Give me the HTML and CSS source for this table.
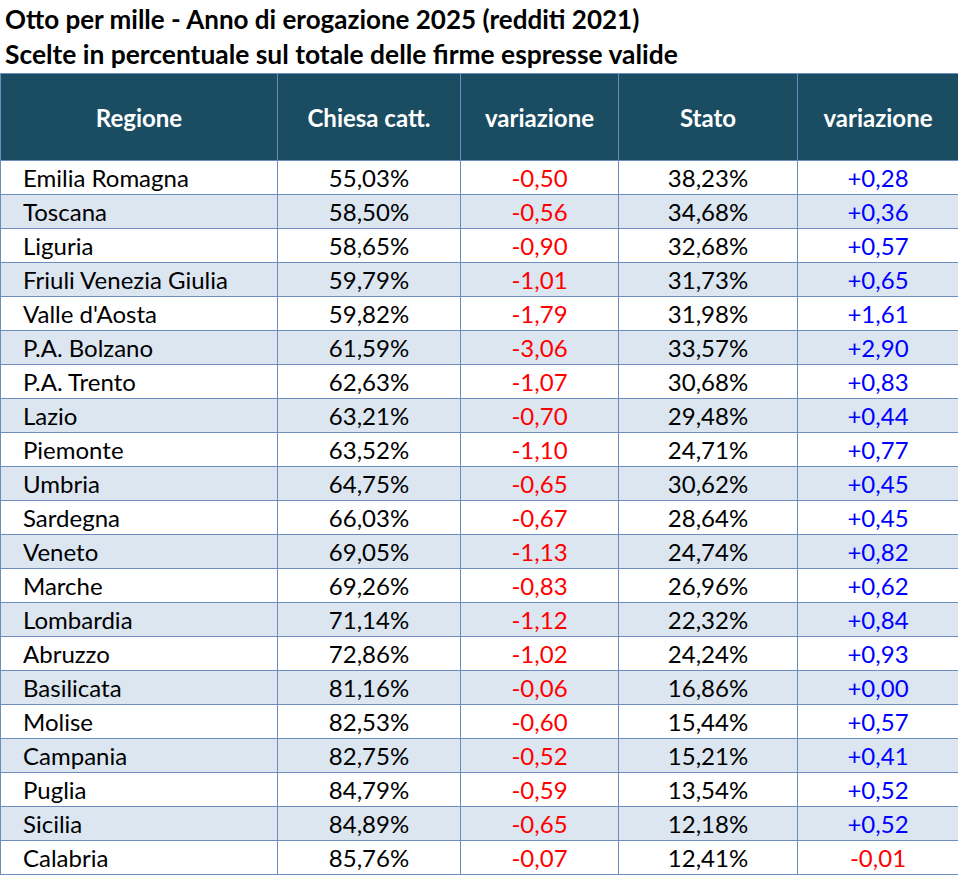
FILE: index.html
```html
<!DOCTYPE html>
<html lang="it">
<head>
<meta charset="utf-8">
<title>Otto per mille 2025</title>
<link rel="stylesheet" href="styles.css">
</head>
<body>
<div class="page">
  <h1 class="title">Otto per mille - Anno di erogazione 2025 (redditi 2021)</h1>
  <h2 class="subtitle">Scelte in percentuale sul totale delle firme espresse valide</h2>
  <table class="data">
    <colgroup>
      <col class="c1"><col class="c2"><col class="c3"><col class="c4"><col class="c5">
    </colgroup>
    <thead>
      <tr><th>Regione</th><th>Chiesa catt.</th><th>variazione</th><th>Stato</th><th>variazione</th></tr>
    </thead>
    <tbody>
      <tr><td class="name">Emilia Romagna</td><td>55,03%</td><td class="neg">-0,50</td><td>38,23%</td><td class="pos">+0,28</td></tr>
      <tr><td class="name">Toscana</td><td>58,50%</td><td class="neg">-0,56</td><td>34,68%</td><td class="pos">+0,36</td></tr>
      <tr><td class="name">Liguria</td><td>58,65%</td><td class="neg">-0,90</td><td>32,68%</td><td class="pos">+0,57</td></tr>
      <tr><td class="name">Friuli Venezia Giulia</td><td>59,79%</td><td class="neg">-1,01</td><td>31,73%</td><td class="pos">+0,65</td></tr>
      <tr><td class="name">Valle d'Aosta</td><td>59,82%</td><td class="neg">-1,79</td><td>31,98%</td><td class="pos">+1,61</td></tr>
      <tr><td class="name">P.A. Bolzano</td><td>61,59%</td><td class="neg">-3,06</td><td>33,57%</td><td class="pos">+2,90</td></tr>
      <tr><td class="name">P.A. Trento</td><td>62,63%</td><td class="neg">-1,07</td><td>30,68%</td><td class="pos">+0,83</td></tr>
      <tr><td class="name">Lazio</td><td>63,21%</td><td class="neg">-0,70</td><td>29,48%</td><td class="pos">+0,44</td></tr>
      <tr><td class="name">Piemonte</td><td>63,52%</td><td class="neg">-1,10</td><td>24,71%</td><td class="pos">+0,77</td></tr>
      <tr><td class="name">Umbria</td><td>64,75%</td><td class="neg">-0,65</td><td>30,62%</td><td class="pos">+0,45</td></tr>
      <tr><td class="name">Sardegna</td><td>66,03%</td><td class="neg">-0,67</td><td>28,64%</td><td class="pos">+0,45</td></tr>
      <tr><td class="name">Veneto</td><td>69,05%</td><td class="neg">-1,13</td><td>24,74%</td><td class="pos">+0,82</td></tr>
      <tr><td class="name">Marche</td><td>69,26%</td><td class="neg">-0,83</td><td>26,96%</td><td class="pos">+0,62</td></tr>
      <tr><td class="name">Lombardia</td><td>71,14%</td><td class="neg">-1,12</td><td>22,32%</td><td class="pos">+0,84</td></tr>
      <tr><td class="name">Abruzzo</td><td>72,86%</td><td class="neg">-1,02</td><td>24,24%</td><td class="pos">+0,93</td></tr>
      <tr><td class="name">Basilicata</td><td>81,16%</td><td class="neg">-0,06</td><td>16,86%</td><td class="pos">+0,00</td></tr>
      <tr><td class="name">Molise</td><td>82,53%</td><td class="neg">-0,60</td><td>15,44%</td><td class="pos">+0,57</td></tr>
      <tr><td class="name">Campania</td><td>82,75%</td><td class="neg">-0,52</td><td>15,21%</td><td class="pos">+0,41</td></tr>
      <tr><td class="name">Puglia</td><td>84,79%</td><td class="neg">-0,59</td><td>13,54%</td><td class="pos">+0,52</td></tr>
      <tr><td class="name">Sicilia</td><td>84,89%</td><td class="neg">-0,65</td><td>12,18%</td><td class="pos">+0,52</td></tr>
      <tr><td class="name">Calabria</td><td>85,76%</td><td class="neg">-0,07</td><td>12,41%</td><td class="neg">-0,01</td></tr>
    </tbody>
  </table>
</div>
</body>
</html>
```

FILE: styles.css
```css
html, body {
  margin: 0;
  padding: 0;
  background: #ffffff;
}

.page {
  width: 958px;
  font-family: Lato, "Liberation Sans", sans-serif;
  color: #000000;
}

.title,
.subtitle {
  margin: 0;
  padding-left: 5px;
  font-size: 26px;
  font-weight: 700;
  line-height: 36px;
  height: 36px;
  white-space: nowrap;
}

.title {
  padding-top: 1px;
  height: 35px;
}

.subtitle {
  font-size: 26.4px;
  height: 37px;
}

.data {
  border-collapse: collapse;
  table-layout: fixed;
  width: 958px;
}

.c1 { width: 277px; }
.c2 { width: 183px; }
.c3 { width: 158px; }
.c4 { width: 179px; }
.c5 { width: 161px; }

.data th,
.data td {
  border: 1px solid #6d8cc0;
  padding: 0;
  text-align: center;
  white-space: nowrap;
}

.data th {
  background: #1b4d62;
  color: #ffffff;
  font-size: 24px;
  font-weight: 700;
  height: 86px;
}

.data td {
  font-size: 24px;
  height: 33px;
}

.data tbody tr:nth-child(even) td {
  background: #dce6f1;
}

.data td.name {
  text-align: left;
  padding-left: 22px;
}

.neg { color: #ff0000; }
.pos { color: #0000ff; }
```
